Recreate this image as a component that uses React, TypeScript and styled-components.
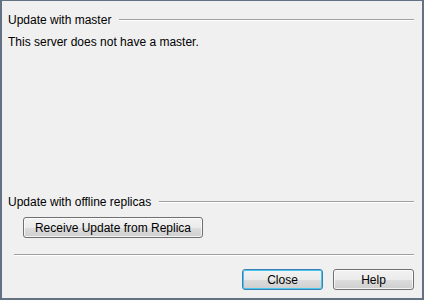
import React from "react";
import { styled, createGlobalStyle } from "styled-components";

const GlobalStyle = createGlobalStyle`
  html, body {
    margin: 0;
    padding: 0;
    background: #f0f0f0;
  }
`;

const Window = styled.div`
  box-sizing: border-box;
  width: 424px;
  height: 300px;
  background: #f0f0f0;
  border: 2px solid #627282;
  border-top-width: 1px;
  display: flex;
  flex-direction: column;
  font-family: "Liberation Sans", Arial, sans-serif;
  font-size: 12px;
  color: #000;
  padding: 0 8px 8px 6px;
`;

const GroupTitle = styled.div<{ $top: number }>`
  display: flex;
  align-items: center;
  height: 16px;
  line-height: 16px;
  margin-top: ${(p) => p.$top}px;
`;

const Rule = styled.div<{ $gap?: number }>`
  flex: 1;
  height: 0;
  margin-left: ${(p) => p.$gap ?? 0}px;
  border-top: 1px solid #a0a0a0;
  border-bottom: 1px solid #ffffff;
`;

const Message = styled.div`
  height: 16px;
  line-height: 16px;
  margin-top: 6px;
`;

const Spacer = styled.div`
  flex: 1;
`;

const Button = styled.button<{ $primary?: boolean; $width: number }>`
  box-sizing: border-box;
  width: ${(p) => p.$width}px;
  height: 21px;
  padding: 0;
  font-family: inherit;
  font-size: 12px;
  color: #000;
  border-radius: 3px;
  border: 1px solid ${(p) => (p.$primary ? "#3c7fb1" : "#707070")};
  background: linear-gradient(#f2f2f2 0%, #ebebeb 50%, #dddddd 51%, #cfcfcf 100%);
  box-shadow: inset 0 0 0 1px
    ${(p) => (p.$primary ? "#48c6f0" : "rgba(255,255,255,0.75)")};
`;

const ReplicaRow = styled.div`
  display: flex;
  margin-top: 7px;
  padding-left: 15px;
`;

const Separator = styled(Rule)`
  flex: none;
  margin: 16px 0 0 6px;
`;

const Footer = styled.div`
  display: flex;
  justify-content: flex-end;
  gap: 10px;
  margin-top: 13px;
`;

export default function App() {
  return (
    <>
      <GlobalStyle />
      <Window>
        <GroupTitle $top={11}>
          Update with master
          <Rule $gap={8} />
        </GroupTitle>
        <Message>This server does not have a master.</Message>
        <Spacer />
        <GroupTitle $top={0}>
          Update with offline replicas
          <Rule $gap={8} />
        </GroupTitle>
        <ReplicaRow>
          <Button $width={180}>Receive Update from Replica</Button>
        </ReplicaRow>
        <Separator />
        <Footer>
          <Button $primary $width={81}>Close</Button>
          <Button $width={81}>Help</Button>
        </Footer>
      </Window>
    </>
  );
}
